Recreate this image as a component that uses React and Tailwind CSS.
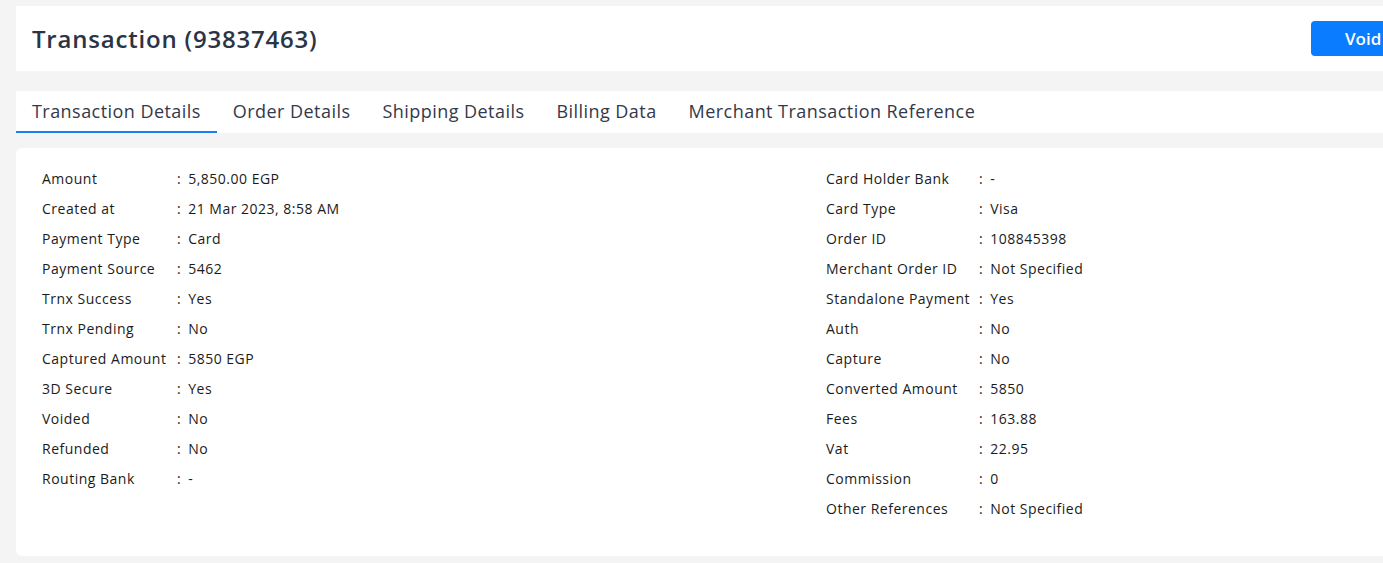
import React from 'react';

const left = [
  ['Amount', '5,850.00 EGP'],
  ['Created at', '21 Mar 2023, 8:58 AM'],
  ['Payment Type', 'Card'],
  ['Payment Source', '5462'],
  ['Trnx Success', 'Yes'],
  ['Trnx Pending', 'No'],
  ['Captured Amount', '5850 EGP'],
  ['3D Secure', 'Yes'],
  ['Voided', 'No'],
  ['Refunded', 'No'],
  ['Routing Bank', '-'],
];

const right = [
  ['Card Holder Bank', '-'],
  ['Card Type', 'Visa'],
  ['Order ID', '108845398'],
  ['Merchant Order ID', 'Not Specified'],
  ['Standalone Payment', 'Yes'],
  ['Auth', 'No'],
  ['Capture', 'No'],
  ['Converted Amount', '5850'],
  ['Fees', '163.88'],
  ['Vat', '22.95'],
  ['Commission', '0'],
  ['Other References', 'Not Specified'],
];

const tabs = ['Transaction Details', 'Order Details', 'Shipping Details', 'Billing Data', 'Merchant Transaction Reference'];

function Row({ label, value, labelW }) {
  return (
    <div className="flex h-[30px] items-center text-[14px] text-[#1b1b1b] tracking-[0.5px]">
      <span className={labelW}>{label}</span>
      <span className="pr-[7px]">:</span>
      <span>{value}</span>
    </div>
  );
}

export default function App() {
  return (
    <div className="w-full h-[563px] overflow-hidden bg-[#f4f4f4]" style={{ fontFamily: '"Open Sans", "Liberation Sans", sans-serif' }}>
      <div className="w-[1420px] pl-4 pt-[6px]">
        {/* header */}
        <div className="h-[65px] bg-white flex items-center justify-between pl-4">
          <h1 className="text-[24px] font-semibold text-[#2b3445] tracking-[0.8px]">Transaction (93837463)</h1>
          <button className="h-[35px] w-[100px] rounded bg-[#0a7cff] text-white text-[17px] font-semibold text-left pl-[34px] mr-[9px]">
            Void
          </button>
        </div>

        {/* tabs */}
        <div className="mt-5 h-[42px] bg-white flex">
          {tabs.map((t, i) => (
            <div
              key={t}
              className={
                i === 0
                  ? 'px-4 flex items-center text-[18px] tracking-[0.45px] text-[#33394a] border-b-2 border-[#1a7ff0]'
                  : 'px-4 flex items-center text-[18px] tracking-[0.45px] text-[#33394a] border-b-2 border-transparent'
              }
            >
              {t}
            </div>
          ))}
        </div>

        {/* details */}
        <div className="mt-[15px] h-[408px] bg-white rounded-l-md pl-[26px] pt-[15px] flex">
          <div className="w-[784px]">
            {left.map(([l, v]) => (
              <Row key={l} label={l} value={v} labelW="w-[135px]" />
            ))}
          </div>
          <div>
            {right.map(([l, v]) => (
              <Row key={l} label={l} value={v} labelW="w-[153px]" />
            ))}
          </div>
        </div>
      </div>
    </div>
  );
}
